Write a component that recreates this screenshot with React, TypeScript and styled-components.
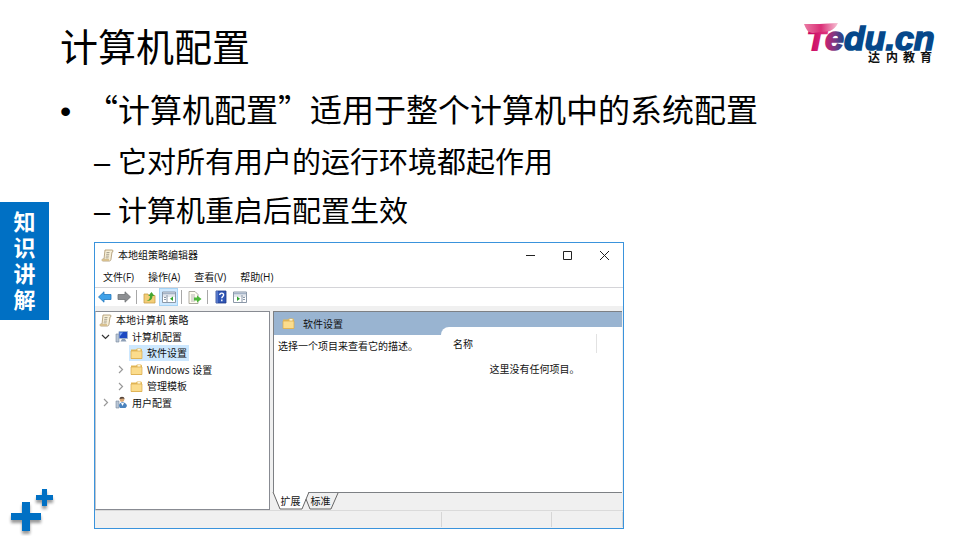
import React, { useState } from "react";
import styled, { createGlobalStyle } from "styled-components";

const cjk = `"Noto Sans CJK SC", sans-serif`;
const ui = `"Open Sans", "Noto Sans CJK SC", sans-serif`;

const GlobalStyle = createGlobalStyle`
  * { box-sizing: border-box; }
  body { margin: 0; background: #fff; color: #000; font-family: ${cjk}; }
  button { font: inherit; color: inherit; background: none; border: 0; padding: 0; margin: 0; }
  h1, p, ul { margin: 0; padding: 0; font-weight: 400; list-style: none; }
  svg { display: block; flex: none; }
`;

const Slide = styled.div`
  display: grid;
  grid-template-columns: 60px 1fr;
  min-height: 100vh;
`;

const Rail = styled.aside`
  display: flex;
  flex-direction: column;
  justify-content: space-between;
  padding: 202px 0 4px;
`;

const SectionTag = styled.div`
  width: 49px;
  padding: 5px 13px 9px;
  background: #0070c4;
  color: #fff;
  font-size: 22px;
  font-weight: 700;
  line-height: 26px;
  text-align: center;
`;

const Content = styled.main`
  display: flex;
  flex-direction: column;
  min-width: 0;
  padding: 13px 24px 0 0;
`;

const Header = styled.header`
  display: flex;
  justify-content: space-between;
  height: 64px;
`;

const Title = styled.h1`
  font-size: 38px;
  line-height: 64px;
`;

const Bullet = styled.div`
  display: flex;
  align-items: baseline;
  height: 62px;
  font-size: 32px;
  line-height: 62px;
`;

const Dot = styled.span`
  width: 26px;
  font-family: "Liberation Sans", sans-serif;
  line-height: 1;
`;

const SubList = styled.ul`
  display: flex;
  flex-direction: column;
  gap: 7px;
  padding-left: 34px;
`;

const SubItem = styled.li`
  display: flex;
  align-items: baseline;
  height: 42px;
  font-size: 29px;
  line-height: 42px;
`;

const Dash = styled.span`
  width: 24px;
  font-family: "Liberation Sans", sans-serif;
  line-height: 1;
`;

const AppWindow = styled.section`
  display: flex;
  flex-direction: column;
  width: 100%;
  max-width: 530px;
  margin: 12px 0 0 34px;
  border: 1px solid #3a93dc;
  background: #f0f0f0;
  color: #111;
  font-family: ${ui};
  font-size: 10px;
  line-height: 16px;
`;

const TitleBar = styled.div`
  display: flex;
  align-items: center;
  height: 24px;
  padding-left: 6px;
  background: #fff;
`;

const WindowName = styled.span`
  flex: 1;
  padding-left: 4px;
`;

const ControlButton = styled.button`
  display: flex;
  align-items: center;
  justify-content: center;
  width: 37px;
  height: 24px;
`;

const MenuBar = styled.nav`
  display: flex;
  gap: 14px;
  height: 21px;
  padding: 0 8px;
  background: #fff;
  border-bottom: 1px solid #d4d4d8;
`;

const MenuButton = styled.button`
  line-height: 20px;
`;

const ToolBar = styled.div`
  display: flex;
  align-items: center;
  height: 18px;
  background: #fff;
`;

const ToolButton = styled.button<{ $on?: boolean }>`
  display: flex;
  align-items: center;
  justify-content: center;
  width: 19px;
  height: 18px;
  background: ${(p) => (p.$on ? "#cde8ff" : "transparent")};
  border: 1px solid ${(p) => (p.$on ? "#a5d3f5" : "transparent")};
`;

const ToolDivider = styled.span`
  width: 1px;
  height: 14px;
  margin: 0 3px;
  background: #a8a8a8;
`;

const Panes = styled.div`
  display: grid;
  grid-template-columns: 175px 1fr;
  column-gap: 3px;
  height: 204px;
  padding: 5px 1px 0 0;
`;

const TreePane = styled.div`
  background: #fff;
  border: 1px solid #888b92;
  border-left-color: #c4c6ca;
`;

const Tree = styled.ul`
  display: flex;
  flex-direction: column;
  height: 99px;
`;

const TreeRow = styled.li<{ $level: number }>`
  display: flex;
  flex: 1;
  align-items: center;
  padding-left: ${(p) => [2, 4, 19][p.$level]}px;
`;

const Toggle = styled.button`
  display: flex;
  justify-content: center;
  width: 10px;
  margin-right: 4px;
`;

const TreeLabel = styled.button<{ $selected: boolean }>`
  display: flex;
  align-items: center;
  gap: 4px;
  padding: 0 2px 0 1px;
  background: ${(p) => (p.$selected ? "#cde8ff" : "transparent")};
`;

const RightSide = styled.div`
  display: flex;
  flex-direction: column;
  min-width: 0;
`;

const DetailPane = styled.div`
  display: grid;
  grid-template-columns: 167px 1fr;
  flex: 1;
  border: 1px solid #7d8084;
  border-width: 1px 0 1px 1px;
  background: #fff;
`;

const Banner = styled.div`
  display: flex;
  align-items: center;
  gap: 8px;
  height: 23px;
  padding-left: 8px;
  background: #99b4d1;
`;

const Description = styled.p`
  padding: 3px 4px;
  white-space: nowrap;
`;

const ListFrame = styled.div`
  padding-top: 15px;
  background: linear-gradient(#99b4d1 23px, #fff 23px);
`;

const ListBody = styled.div`
  height: 100%;
  padding-top: 7px;
  border-top-left-radius: 8px;
  background: #fff;
`;

const ListTable = styled.table`
  width: 100%;
  border-collapse: collapse;

  th {
    height: 19px;
    padding: 0 0 0 12px;
    font-weight: 400;
    text-align: left;
  }
  th + th {
    width: 26px;
    border-left: 1px solid #e2e2e2;
  }
  td {
    padding: 8px 0 0 6px;
    text-align: center;
  }
`;

const Tabs = styled.div`
  display: flex;
  height: 17px;
`;

const TabButton = styled.button`
  position: relative;
  width: 29px;
  margin-left: 1px;
  padding-left: 4px;
  line-height: 15px;
`;

const TabShape = styled.svg`
  position: absolute;
  top: -1px;
  left: -2px;
`;

const TabText = styled.span`
  position: relative;
`;

const StatusBar = styled.div`
  display: grid;
  grid-template-columns: 1fr 110px 71px;
  height: 18px;
  border-top: 1px solid #dadada;
`;

const StatusCell = styled.span`
  margin: 1px 0;
  border-right: 1px solid #d6d6d6;
`;

const LogoDrawing = styled.svg`
  margin-top: 3px;
  overflow: visible;
`;

const Logo = () => (
  <LogoDrawing width="132" height="52" viewBox="0 0 132 52" role="img" aria-label="Tedu.cn 达内教育">
    <defs>
      <linearGradient id="stem" x1="0" y1="0" x2="1" y2="0">
        <stop offset="0" stopColor="#c4005f" />
        <stop offset="1" stopColor="#e2387f" />
      </linearGradient>
      <linearGradient id="swoosh" x1="0" y1="0" x2="1" y2="0">
        <stop offset="0" stopColor="#ea7ba4" />
        <stop offset="0.5" stopColor="#da2f77" />
        <stop offset="1" stopColor="#f7c4d6" />
      </linearGradient>
      <linearGradient id="word" gradientUnits="userSpaceOnUse" x1="20" y1="0" x2="42" y2="0">
        <stop offset="0" stopColor="#d81b6d" />
        <stop offset="0.5" stopColor="#7a3a83" />
        <stop offset="1" stopColor="#06478a" />
      </linearGradient>
    </defs>
    <g fontFamily="Liberation Sans" fontWeight="700" fontStyle="italic">
      <text x="3" y="34" fontSize="30" fill="url(#stem)" stroke="url(#stem)" strokeWidth="2">T</text>
      <text x="21" y="34" fontSize="34" fill="url(#word)" stroke="url(#word)" strokeWidth="1.600">edu.cn</text>
    </g>
    <path d="M0 8 C10 8 20 8 34 7 C32 11 30 13 26 15 L9 17 C4 17 2 13 0 8Z" fill="url(#swoosh)" />
    <text x="64 82 99 116" y="46" fontFamily="Noto Sans CJK SC" fontWeight="700" fontSize="12" fill="#111">达内教育</text>
  </LogoDrawing>
);

const PlusMarks = () => (
  <svg width="60" height="52" viewBox="0 0 60 52" aria-hidden="true">
    <defs>
      <filter id="shade" x="-20%" y="-20%" width="150%" height="160%">
        <feDropShadow dx="0" dy="3" stdDeviation="1.5" floodColor="#000" floodOpacity="0.4" />
      </filter>
    </defs>
    <g fill="#0070c4" filter="url(#shade)">
      <path d="M22 18h8v11h11v7H30v11h-8V36H11v-7h11z" />
      <path d="M42 5h5v6h6v5h-6v6h-5v-6h-6v-5h6z" />
    </g>
  </svg>
);

const ScrollIcon = () => (
  <svg width="13" height="13" viewBox="0 0 13 13">
    <path d="M4 1h7c1.500 0 1.500 2 0 2l-1 7c0 1-.6 2-1.500 2H2c-1.500 0-1.500-2 0-2h1z" fill="#f8f0d8" stroke="#a8926a" strokeWidth="0.8" />
    <path d="M5.500 3.500h3M5.200 5.300h3M4.900 7.100h3M4.600 8.900h3" stroke="#8a8475" strokeWidth="0.7" />
    <path d="M2 10h6v2H2c-1.500 0-1.500-2 0-2z" fill="#d8c08e" />
  </svg>
);

const FolderIcon = () => (
  <svg width="13" height="13" viewBox="0 0 13 13">
    <path d="M1 2.500h5l1-1h4l1 1V12H1z" fill="#e5ba58" />
    <path d="M7.500 2h3v2h-3z" fill="#fff6d8" />
    <path d="M1 4h11v7.500H1z" fill="#fbdc8c" stroke="#d9ab4c" strokeWidth="0.7" />
  </svg>
);

const ComputerIcon = () => (
  <svg width="13" height="13" viewBox="0 0 13 13">
    <path d="M1 4h3v8H1z" fill="#b9c6d6" stroke="#75869b" strokeWidth="0.6" />
    <path d="M4 1.500h8.500v7H4z" fill="#1c49c2" stroke="#9db2cf" />
    <path d="M5 2.500h3L5 6z" fill="#79a8f4" />
    <path d="M7 9h3l1.500 2.500h-6z" fill="#8b9db5" />
  </svg>
);

const UserIcon = () => (
  <svg width="13" height="13" viewBox="0 0 13 13">
    <path d="M1 5h3v7H1z" fill="#b9c6d6" stroke="#75869b" strokeWidth="0.6" />
    <circle cx="7" cy="3.500" r="2.400" fill="#d8a878" />
    <path d="M4.500 3C4.500 0 9.500 0 9.500 3L8 2.500z" fill="#54443a" />
    <path d="M4 10c0-5 7-5 8 0l-1.500 2H5z" fill="#4b83bd" />
    <path d="M6 7l1.500 3L9 7z" fill="#fff" />
  </svg>
);

const ArrowIcon = ({ forward }: { forward?: boolean }) => (
  <svg width="14" height="12" viewBox="0 0 14 12">
    <path
      d={forward ? "M13.500 6L8 .8v2.700H1v5h7v2.700z" : "M.5 6L6 .8v2.700h7v5H6v2.700z"}
      fill={forward ? "#8d8f92" : "#3fa1e8"}
      stroke={forward ? "#707275" : "#2277bd"}
      strokeWidth="0.8"
    />
  </svg>
);

const FolderUpIcon = () => (
  <svg width="13" height="13" viewBox="0 0 13 13">
    <path d="M1 3h4l1 1.500h6V12H1z" fill="#f3cd77" stroke="#c99f48" strokeWidth="0.8" />
    <path d="M3.500 9.500c2 0 3.500-1.500 3.500-4.500H5.200L8.500 1l3 4H9.500c0 4-3 5.500-6 4.500z" fill="#45a52f" />
  </svg>
);

const PanelIcon = ({ right }: { right?: boolean }) => (
  <svg width="14" height="12" viewBox="0 0 14 12">
    <path d="M.5 1h13v10.500H.5z" fill="#fff" stroke="#8b98a8" />
    <path d="M1 1.500h12v2H1z" fill="#a4b3c6" />
    <path d="M1 5h12" stroke="#c5cdd8" />
    <path d={right ? "M9 4v7" : "M5 4v7"} stroke="#8b98a8" />
    <path d={right ? "M4 5.500v4.500L7 7.750z" : "M11 5.500v4.500L8 7.750z"} fill="#2fa32f" />
    <path d={right ? "M10 6.500h2M10 8.500h2" : "M2 6.500h2M2 8.500h2"} stroke="#8b98a8" />
  </svg>
);

const ExportIcon = () => (
  <svg width="14" height="13" viewBox="0 0 14 13">
    <path d="M1 .5h6l3 3v9H1z" fill="#fffdf0" stroke="#99968a" strokeWidth="0.8" />
    <path d="M3 4h4M3 6h4M3 8h3M3 10h4" stroke="#a5a5a5" strokeWidth="0.8" />
    <path d="M6 6.500h3v-2L13.500 8 9 11.500v-2H6z" fill="#4db83a" />
  </svg>
);

const HelpIcon = () => (
  <svg width="12" height="14" viewBox="0 0 12 14">
    <path d="M1 1h10v12H1z" fill="#2f55b5" stroke="#1c3886" strokeWidth="0.8" />
    <path d="M2 1v12" stroke="#7d9be0" />
    <path d="M4.800 5c0-2.500 3.800-2.500 3.800 0 0 1.500-1.800 1.600-1.800 3.300M6.800 9.600v1.600" fill="none" stroke="#fff" strokeWidth="1.400" />
  </svg>
);

const Chevron = ({ open }: { open?: boolean }) => (
  <svg width="9" height="9" viewBox="0 0 9 9">
    <path d={open ? "M1 3l3.500 3.500L8 3" : "M3 1l3.500 3.500L3 8"} fill="none" stroke={open ? "#333" : "#999"} strokeWidth="1.200" />
  </svg>
);

const controls = [
  { name: "最小化", d: "M1 5.500h9" },
  { name: "最大化", d: "M1.500 1.500h8v8h-8z" },
  { name: "关闭", d: "M1 1l9 9M10 1l-9 9" },
];

const menus = ["文件(F)", "操作(A)", "查看(V)", "帮助(H)"];

const treeItems = [
  { label: "本地计算机 策略", level: 0, Icon: ScrollIcon },
  { label: "计算机配置", level: 1, Icon: ComputerIcon, toggle: "open" },
  { label: "软件设置", level: 2, Icon: FolderIcon, toggle: "none" },
  { label: "Windows 设置", level: 2, Icon: FolderIcon, toggle: "closed" },
  { label: "管理模板", level: 2, Icon: FolderIcon, toggle: "closed" },
  { label: "用户配置", level: 1, Icon: UserIcon, toggle: "closed" },
];

const TreeSpacer = styled.span`
  width: 14px;
`;

const PolicyEditor = () => {
  const [selected, setSelected] = useState("软件设置");
  return (
    <AppWindow aria-label="本地组策略编辑器">
      <TitleBar>
        <ScrollIcon />
        <WindowName>本地组策略编辑器</WindowName>
        {controls.map((c) => (
          <ControlButton key={c.name} aria-label={c.name}>
            <svg width="11" height="11" viewBox="0 0 11 11">
              <path d={c.d} fill="none" stroke="#222" />
            </svg>
          </ControlButton>
        ))}
      </TitleBar>
      <MenuBar>
        {menus.map((m) => (
          <MenuButton key={m}>{m}</MenuButton>
        ))}
      </MenuBar>
      <ToolBar>
        <ToolButton aria-label="后退"><ArrowIcon /></ToolButton>
        <ToolButton aria-label="前进"><ArrowIcon forward /></ToolButton>
        <ToolDivider />
        <ToolButton aria-label="上一级"><FolderUpIcon /></ToolButton>
        <ToolButton aria-label="显示控制台树" $on><PanelIcon /></ToolButton>
        <ToolDivider />
        <ToolButton aria-label="导出列表"><ExportIcon /></ToolButton>
        <ToolDivider />
        <ToolButton aria-label="帮助"><HelpIcon /></ToolButton>
        <ToolButton aria-label="显示操作窗格"><PanelIcon right /></ToolButton>
      </ToolBar>
      <Panes>
        <TreePane>
          <Tree>
            {treeItems.map(({ label, level, Icon, toggle }) => (
              <TreeRow key={label} $level={level}>
                {toggle === "none" && <TreeSpacer />}
                {(toggle === "open" || toggle === "closed") && (
                  <Toggle aria-label={"展开 " + label}><Chevron open={toggle === "open"} /></Toggle>
                )}
                <TreeLabel $selected={selected === label} onClick={() => setSelected(label)}>
                  <Icon />
                  {label}
                </TreeLabel>
              </TreeRow>
            ))}
          </Tree>
        </TreePane>
        <RightSide>
          <DetailPane>
            <div>
              <Banner>
                <FolderIcon />
                软件设置
              </Banner>
              <Description>选择一个项目来查看它的描述。</Description>
            </div>
            <ListFrame>
              <ListBody>
                <ListTable>
                  <thead>
                    <tr>
                      <th scope="col">名称</th>
                      <th aria-hidden="true" />
                    </tr>
                  </thead>
                  <tbody>
                    <tr>
                      <td colSpan={2}>这里没有任何项目。</td>
                    </tr>
                  </tbody>
                </ListTable>
              </ListBody>
            </ListFrame>
          </DetailPane>
          <Tabs>
            <TabButton>
              <TabShape width="38" height="18" viewBox="0 0 38 18">
                <path d="M1 0l7 17h22l7-17" fill="#fff" stroke="#666" />
              </TabShape>
              <TabText>扩展</TabText>
            </TabButton>
            <TabButton>
              <TabShape width="38" height="18" viewBox="0 0 38 18">
                <path d="M4 7l4 10h21l7-16" fill="none" stroke="#666" />
              </TabShape>
              <TabText>标准</TabText>
            </TabButton>
          </Tabs>
        </RightSide>
      </Panes>
      <StatusBar>
        <StatusCell />
        <StatusCell />
        <StatusCell />
      </StatusBar>
    </AppWindow>
  );
};

export default function App() {
  return (
    <>
      <GlobalStyle />
      <Slide lang="zh-CN">
        <Rail>
          <SectionTag>知识讲解</SectionTag>
          <PlusMarks />
        </Rail>
        <Content>
          <Header>
            <Title>计算机配置</Title>
            <Logo />
          </Header>
          <Bullet>
            <Dot>•</Dot>
            <p>“计算机配置”适用于整个计算机中的系统配置</p>
          </Bullet>
          <SubList>
            <SubItem><Dash>–</Dash>它对所有用户的运行环境都起作用</SubItem>
            <SubItem><Dash>–</Dash>计算机重启后配置生效</SubItem>
          </SubList>
          <PolicyEditor />
        </Content>
      </Slide>
    </>
  );
}
